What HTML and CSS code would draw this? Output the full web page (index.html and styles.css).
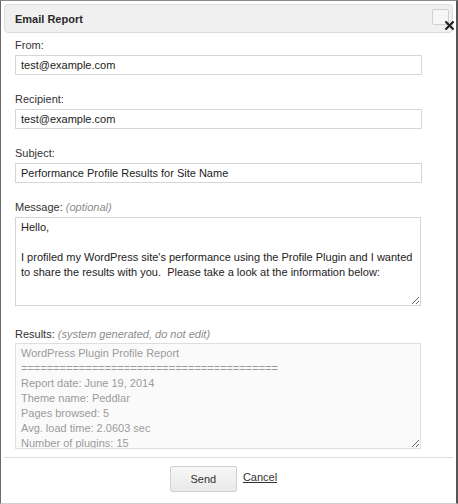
FILE: index.html
```html
<!DOCTYPE html>
<html>
<head>
<meta charset="utf-8">
<link rel="stylesheet" href="styles.css">
</head>
<body>
<div class="frame">
  <div class="titlebar">
    <span class="title">Email Report</span>
    <span class="close-box"></span>
    <svg class="close-x" width="9" height="9" viewBox="0 0 9 9"><path d="M1.2 1.2 L7.8 7.8 M7.8 1.2 L1.2 7.8" stroke="#222" stroke-width="2.2" stroke-linecap="square"/></svg>
  </div>
  <div class="content">
    <div class="field">
      <label class="label">From:</label>
      <input class="input" type="text" value="test@example.com">
    </div>
    <div class="field">
      <label class="label">Recipient:</label>
      <input class="input" type="text" value="test@example.com">
    </div>
    <div class="field">
      <label class="label">Subject:</label>
      <input class="input" type="text" value="Performance Profile Results for Site Name">
    </div>
    <div class="field field-msg">
      <label class="label">Message: <em class="hint">(optional)</em></label>
      <textarea class="area area-msg">Hello,

I profiled my WordPress site's performance using the Profile Plugin and I wanted to share the results with you.  Please take a look at the information below:</textarea>
    </div>
    <div class="field field-results">
      <label class="label">Results: <em class="hint">(system generated, do not edit)</em></label>
      <textarea class="area area-results" readonly>WordPress Plugin Profile Report
========================================
Report date: June 19, 2014
Theme name: Peddlar
Pages browsed: 5
Avg. load time: 2.0603 sec
Number of plugins: 15</textarea>
    </div>
  </div>
  <div class="footer">
    <button class="btn" type="button">Send</button>
    <a class="cancel" href="#">Cancel</a>
  </div>
</div>
</body>
</html>
```
FILE: styles.css
```css
html, body {
  margin: 0;
  padding: 0;
  background: #ffffff;
}
body {
  font-family: "Liberation Sans", Arial, Helvetica, sans-serif;
  font-size: 11px;
  color: #333333;
}
.frame {
  box-sizing: border-box;
  width: 458px;
  height: 504px;
  border-left: 1px solid #6a6a6a;
  border-right: 2px solid #555555;
  border-top: 1px solid #8a8a8a;
  border-bottom: 1px solid #cfcfcf;
  padding: 3px 3px 0 3px;
  display: flex;
  flex-direction: column;
  background: #ffffff;
}
.titlebar {
  position: relative;
  box-sizing: border-box;
  height: 29px;
  border: 1px solid #dcdcdc;
  border-radius: 4px;
  background: #f0f0f0;
  padding-left: 10px;
  display: flex;
  align-items: center;
}
.title {
  font-weight: bold;
  color: #2a2a2a;
  font-size: 11px;
}
.close-box {
  position: absolute;
  left: 427px;
  top: 4px;
  width: 17px;
  height: 16px;
  box-sizing: border-box;
  border: 1px solid #cfcfcf;
  border-radius: 2px;
  background: #f6f6f6;
}
.close-x {
  position: absolute;
  left: 440px;
  top: 16px;
}
.content {
  padding-left: 11px;
  display: flex;
  flex-direction: column;
}
.field {
  display: flex;
  flex-direction: column;
  align-items: flex-start;
  margin-top: 17px;
}
.field:first-child {
  margin-top: 5px;
}
.label {
  display: block;
  line-height: 15px;
  height: 15px;
  margin-bottom: 2px;
  color: #333333;
}
.hint {
  font-style: italic;
  color: #8c8c8c;
}
.input {
  box-sizing: border-box;
  width: 407px;
  height: 20px;
  margin: 0;
  border: 1px solid #d6d6d6;
  border-radius: 0;
  padding: 0 5px;
  font-family: "Liberation Sans", Arial, Helvetica, sans-serif;
  font-size: 11px;
  color: #222222;
  background: #ffffff;
  outline: none;
}
.area {
  display: block;
  box-sizing: border-box;
  width: 406px;
  margin: 0;
  border: 1px solid #d6d6d6;
  border-radius: 0;
  padding: 2px 5px;
  font-family: "Liberation Sans", Arial, Helvetica, sans-serif;
  font-size: 11px;
  line-height: 15px;
  color: #222222;
  background: #ffffff;
  overflow: hidden;
  outline: none;
}
.area-msg {
  height: 89px;
}
.field-results {
  margin-top: 21px;
}
.field-results .label {
  margin-bottom: 1px;
}
.area-results {
  height: 106px;
  color: #9a9a9a;
  background: #fafafa;
  border-color: #dedede;
}
.footer {
  flex: 1;
  margin-top: 8px;
  border-top: 1px solid #dddddd;
  padding: 8px 10px 0 0;
  display: flex;
  justify-content: center;
  align-items: flex-start;
  gap: 6px;
}
.btn {
  box-sizing: border-box;
  width: 67px;
  height: 26px;
  margin: 0;
  border: 1px solid #d0d0d0;
  border-radius: 2px;
  background: linear-gradient(#f7f7f7, #e9e9e9);
  font-family: "Liberation Sans", Arial, Helvetica, sans-serif;
  font-size: 11px;
  color: #333333;
  padding: 0;
}
.cancel {
  color: #333333;
  text-decoration: underline;
  line-height: 15px;
  margin-top: 4px;
}
```
